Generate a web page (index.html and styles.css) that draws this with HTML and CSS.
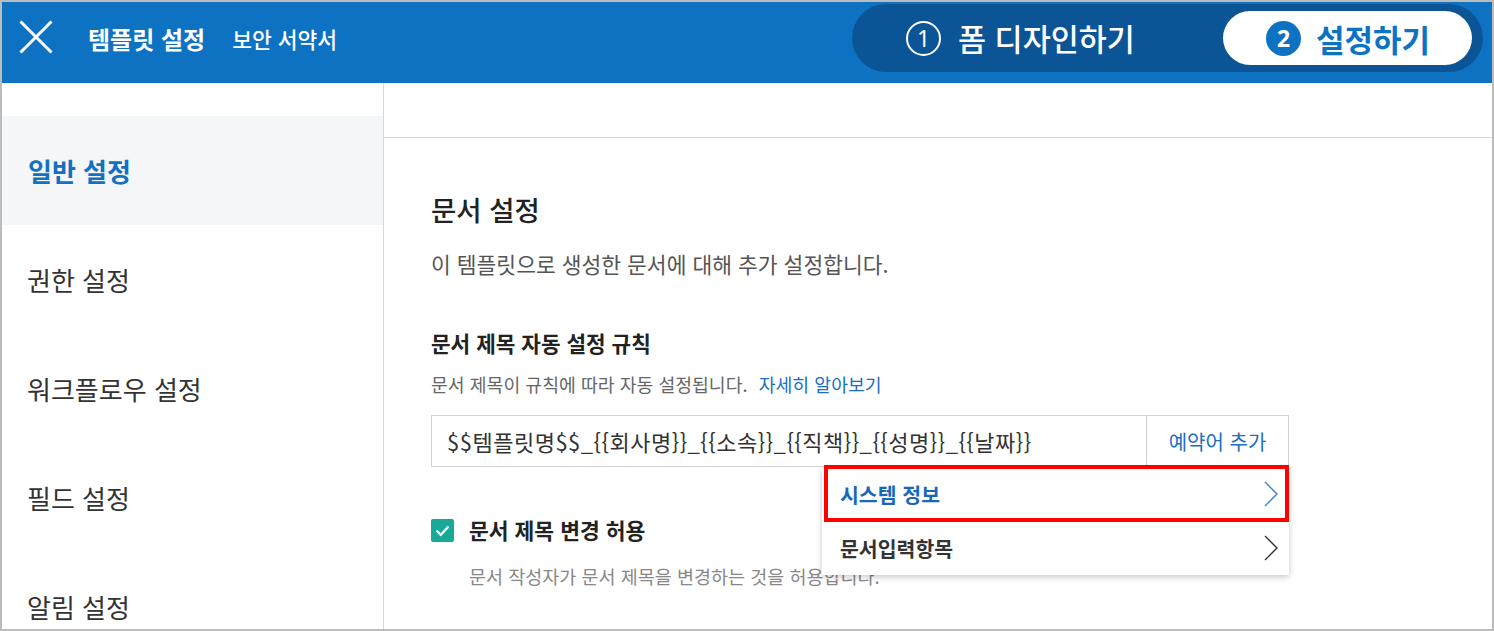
FILE: index.html
```html
<!DOCTYPE html>
<html lang="ko">
<head>
<meta charset="utf-8">
<title>템플릿 설정</title>
<link rel="stylesheet" href="styles.css">
</head>
<body>
<div class="frame">
  <header class="topbar">
    <div class="left">
      <svg class="close" width="34" height="34" viewBox="0 0 34 34"><path d="M1.5 1.5 L32.5 32.5 M32.5 1.5 L1.5 32.5" stroke="#fff" stroke-width="3" fill="none"/></svg>
      <span class="tpl">템플릿 설정</span>
      <span class="doc">보안 서약서</span>
    </div>
    <div class="steps">
      <div class="step one"><span class="num outline">1</span><span class="label">폼 디자인하기</span></div>
      <div class="step two"><span class="num filled">2</span><span class="label">설정하기</span></div>
    </div>
  </header>
  <div class="body">
    <nav class="side">
      <div class="item active">일반 설정</div>
      <div class="item">권한 설정</div>
      <div class="item">워크플로우 설정</div>
      <div class="item">필드 설정</div>
      <div class="item">알림 설정</div>
    </nav>
    <main class="main">
      <div class="subbar"></div>
      <div class="content">
        <h2 class="title">문서 설정</h2>
        <p class="desc">이 템플릿으로 생성한 문서에 대해 추가 설정합니다.</p>
        <h3 class="sub">문서 제목 자동 설정 규칙</h3>
        <p class="small">문서 제목이 규칙에 따라 자동 설정됩니다. <a class="link">자세히 알아보기</a></p>
        <div class="inputwrap">
          <div class="input">
            <div class="value">$$템플릿명$$_{{회사명}}_{{소속}}_{{직책}}_{{성명}}_{{날짜}}</div>
            <div class="addbtn">예약어 추가</div>
          </div>
          <div class="menu">
            <div class="mitem sel">시스템 정보
              <svg class="chev" width="14" height="26" viewBox="0 0 14 26"><path d="M1 1 L13 13 L1 25" stroke="#3b84cf" stroke-width="1.4" fill="none"/></svg>
            </div>
            <div class="mitem">문서입력항목
              <svg class="chev" width="14" height="26" viewBox="0 0 14 26"><path d="M1 1 L13 13 L1 25" stroke="#333" stroke-width="1.4" fill="none"/></svg>
            </div>
            <div class="highlight"></div>
          </div>
        </div>
        <div class="check">
          <span class="box"><svg width="23" height="23" viewBox="0 0 23 23"><path d="M5.5 11.5 L9.8 15.8 L17.5 7.5" stroke="#fff" stroke-width="2.2" fill="none"/></svg></span>
          <span class="clabel">문서 제목 변경 허용</span>
        </div>
        <p class="cdesc">문서 작성자가 문서 제목을 변경하는 것을 허용합니다.</p>
      </div>
    </main>
  </div>
</div>
</body>
</html>
```
FILE: styles.css
```css
* { box-sizing: border-box; }
html, body { margin: 0; padding: 0; }
body {
  font-family: "Noto Sans CJK KR", "Noto Sans", sans-serif;
  color: #333;
  background: #fff;
}
.frame {
  width: 1494px;
  height: 631px;
  border: 2px solid #bcbcbc;
  overflow: hidden;
  display: flex;
  flex-direction: column;
}
.topbar {
  height: 81px;
  flex: none;
  background: #0e72c3;
  display: flex;
  align-items: flex-start;
  justify-content: space-between;
  padding: 2px 9px 0 17px;
}
.left {
  height: 68px;
  display: flex;
  align-items: center;
  color: #fff;
}
.close { margin-right: 35px; margin-top: -2px; }
.tpl { font-size: 24px; font-weight: 700; margin-right: 27px; }
.doc { font-size: 21.5px; font-weight: 500; }
.steps {
  width: 631px;
  height: 68px;
  border-radius: 34px;
  background: #0b5596;
  display: flex;
  align-items: center;
  padding: 0 11px 0 54px;
}
.step { display: flex; align-items: center; }
.step.one { flex: 1; color: #fff; }
.step.two {
  width: 249px;
  height: 54px;
  border-radius: 27px;
  background: #fff;
  padding-left: 43px;
  color: #0e72c3;
}
.num {
  width: 35px;
  height: 35px;
  border-radius: 50%;
  display: flex;
  align-items: center;
  justify-content: center;
  font-family: "Noto Sans", sans-serif;
  font-size: 23px;
  line-height: 1;
  flex: none;
}
.num.outline { border: 2px solid #fff; color: #fff; margin-right: 17px; }
.num.filled { background: #0e72c3; color: #fff; font-weight: 700; margin-right: 15px; }
.step .label { font-size: 31px; line-height: 1; white-space: nowrap; }
.step.one .label { font-weight: 500; font-size: 30.5px; }
.step.two .label { font-weight: 700; }

.body { flex: 1; display: flex; min-height: 0; }
.side {
  width: 382px;
  flex: none;
  border-right: 1px solid #d8d8d8;
  padding-top: 33px;
}
.item {
  height: 109px;
  display: flex;
  align-items: center;
  padding-left: 25px;
  font-size: 26px;
  color: #333;
  white-space: nowrap;
}
.item.active {
  background: #f4f6f8;
  color: #1470c1;
  font-weight: 700;
  padding-left: 26px;
}
.main { flex: 1; display: flex; flex-direction: column; }
.subbar { height: 55px; flex: none; border-bottom: 1px solid #d8d8d8; }
.content { padding: 53px 0 0 47px; }
.title { margin: 0; font-size: 27.5px; line-height: 36px; font-weight: 500; color: #222; }
.desc { margin: 23px 0 0; font-size: 21.5px; line-height: 28px; color: #555; }
.sub { margin: 51px 0 0; font-size: 21.3px; line-height: 28px; font-weight: 700; color: #222; }
.small { margin: 15px 0 0; font-size: 18.3px; line-height: 24px; color: #666; }
.link { color: #1a6fc0; margin-left: 6px; }
.inputwrap { position: relative; margin-top: 19px; width: 858px; }
.input {
  height: 52px;
  border: 1px solid #d2d2d2;
  display: flex;
  align-items: center;
}
.value { flex: 1; padding-left: 15px; font-size: 22px; letter-spacing: 0.5px; color: #333; white-space: nowrap; }
.addbtn {
  width: 142px;
  height: 100%;
  border-left: 1px solid #d2d2d2;
  display: flex;
  align-items: center;
  justify-content: center;
  font-size: 20px;
  color: #1a6fc0;
}
.menu {
  position: absolute;
  left: 391px;
  top: 52px;
  width: 467px;
  background: #fff;
  box-shadow: 0 2px 6px rgba(0,0,0,0.22);
  z-index: 2;
}
.mitem {
  height: 54px;
  display: flex;
  align-items: center;
  justify-content: space-between;
  padding: 0 11px 0 18px;
  font-size: 20.5px;
  font-weight: 700;
  color: #333;
}
.mitem.sel { color: #1768b8; }
.highlight {
  position: absolute;
  left: 2px;
  top: -2px;
  width: 465px;
  height: 57px;
  border: 4px solid #f00;
}
.check { margin-top: 49px; display: flex; align-items: center; height: 28px; }
.box {
  width: 23px;
  height: 23px;
  border-radius: 2px;
  background: #19a999;
  display: block;
  margin-right: 15px;
  flex: none;
}
.box svg { display: block; }
.clabel { font-size: 21.5px; line-height: 28px; font-weight: 700; color: #222; }
.cdesc { margin: 20px 0 0 38px; font-size: 18.5px; line-height: 24px; color: #888; }
```
